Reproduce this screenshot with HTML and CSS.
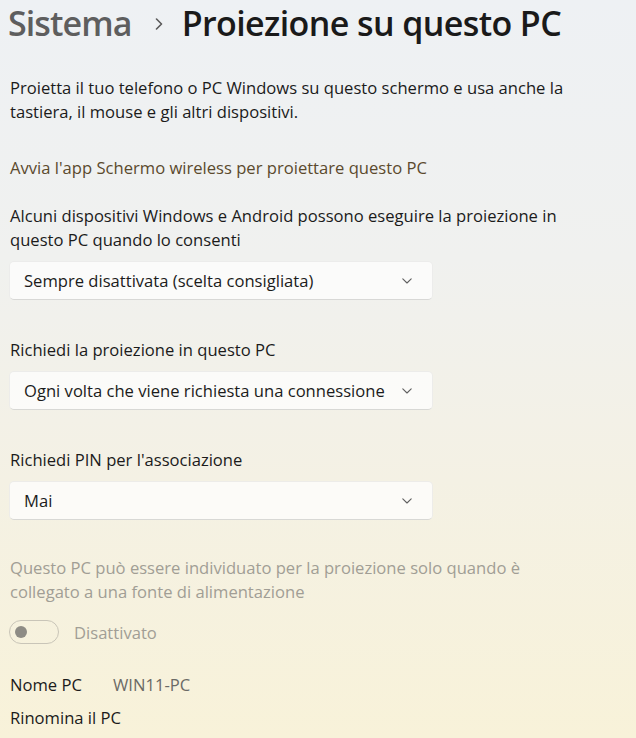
FILE: index.html
```html
<!DOCTYPE html>
<html lang="it">
<head>
<meta charset="utf-8">
<title>Proiezione su questo PC</title>
<link rel="stylesheet" href="styles.css">
</head>
<body>
<main class="page">
  <h1 class="crumb">
    <span class="crumb-parent">Sistema</span>
    <svg class="crumb-sep" width="8" height="12" viewBox="0 0 8 12"><polyline points="1.5,1 6.5,6 1.5,11" fill="none" stroke="#5a5a5a" stroke-width="1.6" stroke-linecap="round" stroke-linejoin="round"/></svg>
    <span class="crumb-current">Proiezione su questo PC</span>
  </h1>

  <p class="desc">Proietta il tuo telefono o PC Windows su questo schermo e usa anche la<br>tastiera, il mouse e gli altri dispositivi.</p>

  <a class="link" href="#">Avvia l'app Schermo wireless per proiettare questo PC</a>

  <section class="field first">
    <p class="label">Alcuni dispositivi Windows e Android possono eseguire la proiezione in<br>questo PC quando lo consenti</p>
    <div class="select">
      <span>Sempre disattivata (scelta consigliata)</span>
      <svg class="chev" width="10" height="6" viewBox="0 0 10 6"><polyline points="0.8,0.8 5,5 9.2,0.8" fill="none" stroke="#5f5f5f" stroke-width="1.1" stroke-linecap="round" stroke-linejoin="round"/></svg>
    </div>
  </section>

  <section class="field">
    <p class="label">Richiedi la proiezione in questo PC</p>
    <div class="select">
      <span>Ogni volta che viene richiesta una connessione</span>
      <svg class="chev" width="10" height="6" viewBox="0 0 10 6"><polyline points="0.8,0.8 5,5 9.2,0.8" fill="none" stroke="#5f5f5f" stroke-width="1.1" stroke-linecap="round" stroke-linejoin="round"/></svg>
    </div>
  </section>

  <section class="field">
    <p class="label">Richiedi PIN per l'associazione</p>
    <div class="select">
      <span>Mai</span>
      <svg class="chev" width="10" height="6" viewBox="0 0 10 6"><polyline points="0.8,0.8 5,5 9.2,0.8" fill="none" stroke="#5f5f5f" stroke-width="1.1" stroke-linecap="round" stroke-linejoin="round"/></svg>
    </div>
  </section>

  <p class="disabled-text">Questo PC può essere individuato per la proiezione solo quando è<br>collegato a una fonte di alimentazione</p>

  <div class="toggle-row">
    <span class="toggle"><span class="knob"></span></span>
    <span class="toggle-label">Disattivato</span>
  </div>

  <div class="pc-name">
    <span class="pc-key">Nome PC</span>
    <span class="pc-value">WIN11-PC</span>
  </div>

  <a class="rename" href="#">Rinomina il PC</a>
</main>
</body>
</html>
```

FILE: styles.css
```css
html, body {
  margin: 0;
  padding: 0;
  height: 100%;
}

body {
  background: linear-gradient(to bottom, #eef1f4 0%, #f0f1ef 35%, #f4f1e4 65%, #f8f2d9 100%);
  font-family: "Open Sans", "Noto Sans", sans-serif;
  font-size: 16.6px;
  color: #1b1b1b;
  overflow: hidden;
}

.page {
  padding: 0 10px;
  display: flex;
  flex-direction: column;
  align-items: flex-start;
}

.crumb {
  margin: 0 0 0 -2px;
  display: flex;
  align-items: center;
  font-weight: 600;
  font-size: 34px;
  letter-spacing: -0.6px;
  line-height: 46px;
}

.crumb-parent {
  color: #5e5e5e;
  letter-spacing: -0.9px;
}

.crumb-sep {
  margin: 2px 19px 0 23px;
}

.crumb-current {
  color: #1a1a1a;
}

.desc {
  margin: 30px 0 0;
  line-height: 24px;
}

.link {
  margin-top: 32px;
  line-height: 24px;
  color: #5b4a2d;
  text-decoration: none;
}

.field {
  display: flex;
  flex-direction: column;
  margin-top: 38px;
}

.field.first {
  margin-top: 24px;
}

.label {
  margin: 0;
  line-height: 24px;
}

.select {
  margin-top: 9px;
  width: 424px;
  height: 39px;
  box-sizing: border-box;
  margin-left: -1px;
  display: flex;
  align-items: center;
  justify-content: space-between;
  padding: 0 20px 0 14px;
  background: rgba(253, 253, 251, 0.85);
  border: 1px solid rgba(0, 0, 0, 0.06);
  border-bottom-color: rgba(0, 0, 0, 0.14);
  border-radius: 5px;
}

.disabled-text {
  margin: 36px 0 0;
  line-height: 24px;
  color: #a19e95;
}

.toggle-row {
  margin-top: 16px;
  display: flex;
  align-items: center;
  height: 24px;
}

.toggle {
  width: 50px;
  height: 24px;
  box-sizing: border-box;
  margin-left: -1px;
  border: 1px solid #c9c5b8;
  border-radius: 12px;
  display: flex;
  align-items: center;
  padding-left: 5px;
}

.knob {
  width: 12px;
  height: 12px;
  border-radius: 50%;
  background: #8e8c85;
}

.toggle-label {
  margin-left: 15px;
  color: #a19e95;
}

.pc-name {
  margin-top: 29px;
  line-height: 24px;
  display: flex;
}

.pc-key {
  width: 103px;
}

.pc-value {
  color: #6b6a66;
}

.rename {
  margin-top: 9px;
  line-height: 24px;
  color: #1b1b1b;
  text-decoration: none;
}
```
